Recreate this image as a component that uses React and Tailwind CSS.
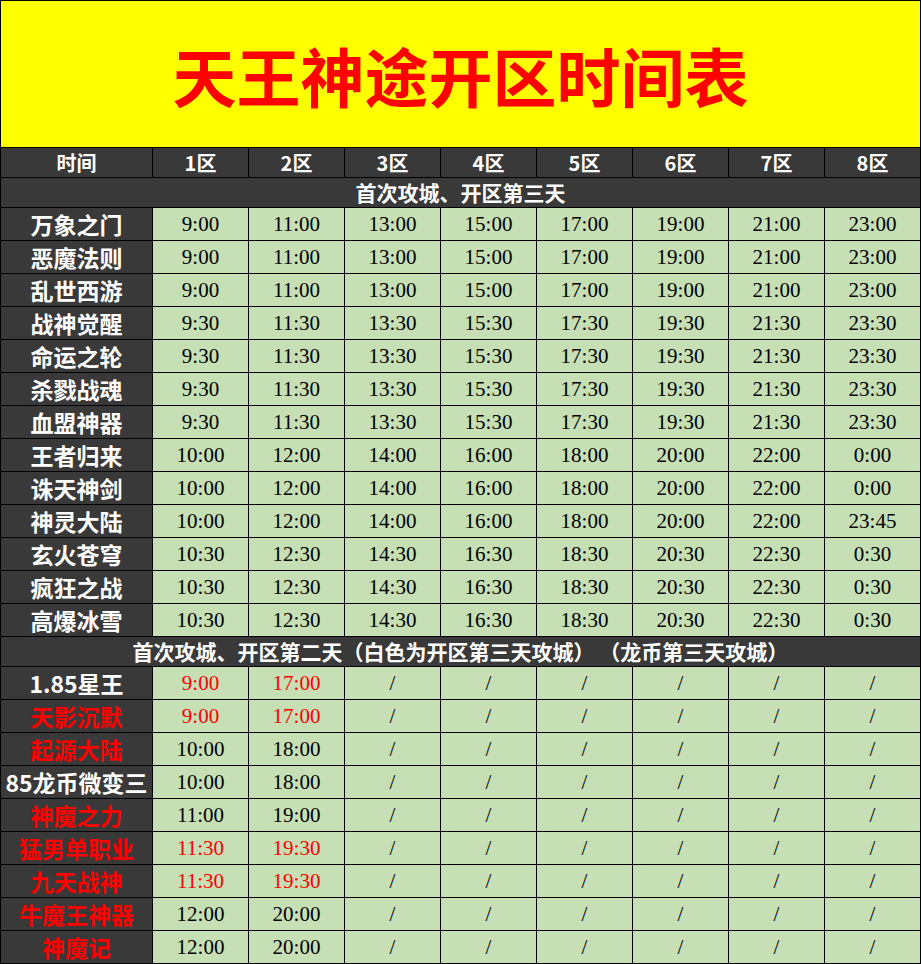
import React from "react";

const zones = ["1区", "2区", "3区", "4区", "5区", "6区", "7区", "8区"];

// rows of the first batch: name, times for zones 1-8
const firstBatch = [
  ["万象之门", ["9:00", "11:00", "13:00", "15:00", "17:00", "19:00", "21:00", "23:00"]],
  ["恶魔法则", ["9:00", "11:00", "13:00", "15:00", "17:00", "19:00", "21:00", "23:00"]],
  ["乱世西游", ["9:00", "11:00", "13:00", "15:00", "17:00", "19:00", "21:00", "23:00"]],
  ["战神觉醒", ["9:30", "11:30", "13:30", "15:30", "17:30", "19:30", "21:30", "23:30"]],
  ["命运之轮", ["9:30", "11:30", "13:30", "15:30", "17:30", "19:30", "21:30", "23:30"]],
  ["杀戮战魂", ["9:30", "11:30", "13:30", "15:30", "17:30", "19:30", "21:30", "23:30"]],
  ["血盟神器", ["9:30", "11:30", "13:30", "15:30", "17:30", "19:30", "21:30", "23:30"]],
  ["王者归来", ["10:00", "12:00", "14:00", "16:00", "18:00", "20:00", "22:00", "0:00"]],
  ["诛天神剑", ["10:00", "12:00", "14:00", "16:00", "18:00", "20:00", "22:00", "0:00"]],
  ["神灵大陆", ["10:00", "12:00", "14:00", "16:00", "18:00", "20:00", "22:00", "23:45"]],
  ["玄火苍穹", ["10:30", "12:30", "14:30", "16:30", "18:30", "20:30", "22:30", "0:30"]],
  ["疯狂之战", ["10:30", "12:30", "14:30", "16:30", "18:30", "20:30", "22:30", "0:30"]],
  ["高爆冰雪", ["10:30", "12:30", "14:30", "16:30", "18:30", "20:30", "22:30", "0:30"]],
];

// name, redName, times, redTimes
const secondBatch = [
  ["1.85星王", false, ["9:00", "17:00"], true],
  ["天影沉默", true, ["9:00", "17:00"], true],
  ["起源大陆", true, ["10:00", "18:00"], false],
  ["85龙币微变三", false, ["10:00", "18:00"], false],
  ["神魔之力", true, ["11:00", "19:00"], false],
  ["猛男单职业", true, ["11:30", "19:30"], true],
  ["九天战神", true, ["11:30", "19:30"], true],
  ["牛魔王神器", true, ["12:00", "20:00"], false],
  ["神魔记", true, ["12:00", "20:00"], false],
];

const cjk = "font-['Noto_Sans_CJK_SC',sans-serif]";
const serif = "font-['Liberation_Serif','Times_New_Roman',serif]";

function NameCell({ name, red }) {
  return (
    <div
      className={`h-[32px] bg-[#393939] flex items-center justify-center overflow-hidden whitespace-nowrap ${cjk} font-bold text-[23px] leading-none ${
        red ? "text-[#ff0000]" : "text-white"
      }`}
    >
      {name}
    </div>
  );
}

function TimeCell({ value, red }) {
  return (
    <div
      className={`h-[32px] bg-[#c6dfb5] flex items-center justify-center ${serif} text-[21px] leading-none ${
        red ? "text-[#ff0000]" : "text-black"
      }`}
    >
      {value}
    </div>
  );
}

function SectionRow({ children }) {
  return (
    <div
      className={`col-span-9 h-[29px] bg-[#393939] flex items-center justify-center text-white font-bold text-[21px] leading-none whitespace-pre ${cjk}`}
    >
      {children}
    </div>
  );
}

export default function App() {
  return (
    <div className="w-[921px] h-[964px] bg-white">
      <div className="grid grid-cols-[151px_repeat(8,95px)] gap-px bg-black p-px">
        <div
          className={`col-span-9 h-[146px] bg-[#ffff00] flex items-center justify-center ${cjk} font-bold text-[64px] leading-none text-[#ff0000]`}
        >
          天王神途开区时间表
        </div>

        <div className={`h-[29px] bg-[#393939] flex items-center justify-center text-white font-bold text-[20px] leading-none ${cjk}`}>
          时间
        </div>
        {zones.map((z) => (
          <div
            key={z}
            className={`h-[29px] bg-[#393939] flex items-center justify-center text-white font-bold text-[20px] leading-none ${cjk}`}
          >
            {z}
          </div>
        ))}

        <SectionRow>首次攻城、开区第三天</SectionRow>

        {firstBatch.map(([name, times]) => (
          <React.Fragment key={name}>
            <NameCell name={name} />
            {times.map((t, i) => (
              <TimeCell key={i} value={t} />
            ))}
          </React.Fragment>
        ))}

        <SectionRow>首次攻城、开区第二天（白色为开区第三天攻城） （龙币第三天攻城）</SectionRow>

        {secondBatch.map(([name, redName, times, redTimes]) => (
          <React.Fragment key={name}>
            <NameCell name={name} red={redName} />
            <TimeCell value={times[0]} red={redTimes} />
            <TimeCell value={times[1]} red={redTimes} />
            {[0, 1, 2, 3, 4, 5].map((i) => (
              <TimeCell key={i} value="/" />
            ))}
          </React.Fragment>
        ))}
      </div>
    </div>
  );
}
